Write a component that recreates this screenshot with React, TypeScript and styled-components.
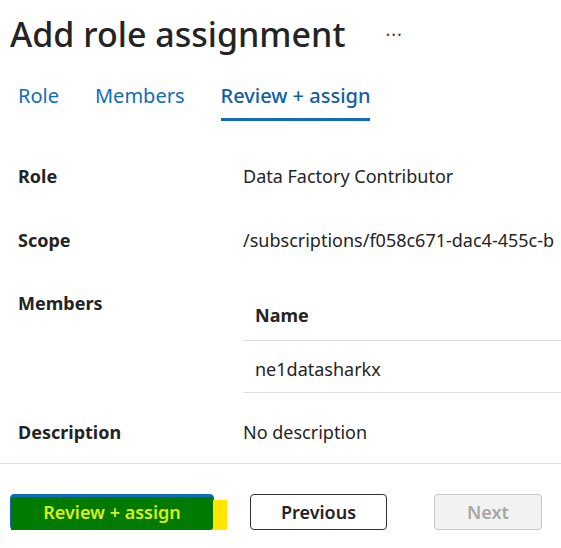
import styled, { createGlobalStyle } from "styled-components"

const GlobalStyle = createGlobalStyle`
    html, body {
        margin: 0;
        padding: 0;
        background: #ffffff;
        font-family: "Noto Sans", "Open Sans", sans-serif;
        color: #242424;
    }
`

const Page = styled.div`
    width: 561px;
    height: 548px;
    overflow: hidden;
    display: flex;
    flex-direction: column;
`

const Header = styled.div`
    display: flex;
    align-items: center;
    padding: 12px 0 0 10px;
    height: 44px;
`

const Title = styled.h1`
    margin: 0;
    font-size: 34px;
    font-weight: 500;
    line-height: 44px;
    color: #242424;
`

const More = styled.span`
    margin-left: 40px;
    font-size: 18px;
    color: #424242;
    letter-spacing: 1px;
    line-height: 44px;
`

const Tabs = styled.div`
    display: flex;
    gap: 36px;
    padding: 20px 0 0 18px;
    height: 45px;
    box-sizing: content-box;
`

const Tab = styled.div<{ $active?: boolean }>`
    font-size: 20px;
    line-height: 40px;
    height: 42px;
    color: ${props => props.$active ? "#115ea3" : "#0f6cbd"};
    font-weight: ${props => props.$active ? 500 : 400};
    border-bottom: 3px solid ${props => props.$active ? "#0f6cbd" : "transparent"};
`

const Details = styled.div`
    display: grid;
    grid-template-columns: 225px 1fr;
    padding-left: 18px;
    margin-top: 23px;
`

const Label = styled.div<{ $top?: number }>`
    font-size: 18px;
    font-weight: 700;
    line-height: 26px;
    color: #242424;
    padding-top: ${props => props.$top ?? 0}px;
    align-self: ${props => props.$top !== undefined ? "start" : "center"};
`

const Value = styled.div`
    font-size: 18px;
    line-height: 26px;
    color: #242424;
    white-space: nowrap;
    overflow: hidden;
`

const Cell = styled.div<{ $h: number; $pad?: number }>`
    height: ${props => props.$h}px;
    display: flex;
    align-items: ${props => props.$pad !== undefined ? "flex-start" : "center"};
    padding-top: ${props => props.$pad ?? 0}px;
    box-sizing: border-box;
    overflow: hidden;
`

const Table = styled.div`
    display: flex;
    flex-direction: column;
    margin-top: 17px;
`

const TableRow = styled.div<{ $head?: boolean }>`
    height: 52px;
    display: flex;
    align-items: center;
    padding: ${props => props.$head ? "0" : "4px"} 12px 0;
    box-sizing: border-box;
    border-bottom: 1px solid #e0e0e0;
    font-size: 18px;
    font-weight: ${props => props.$head ? 700 : 400};
    color: #242424;
`

const Footer = styled.div`
    border-top: 1px solid #e0e0e0;
    display: flex;
    gap: 36px;
    padding: 30px 0 0 10px;
`

const Highlight = styled.div`
    position: relative;
    display: flex;
`

const Button = styled.button<{ $variant: "primary" | "default" | "disabled" }>`
    height: 36px;
    box-sizing: border-box;
    border-radius: 4px;
    font-family: "Noto Sans", "Open Sans", sans-serif;
    font-size: 18px;
    font-weight: 600;
    padding: 0 20px;
    cursor: pointer;
    background: ${props =>
        props.$variant === "primary" ? "#0f6cbd" :
        props.$variant === "disabled" ? "#f2f2f2" : "#ffffff"};
    color: ${props =>
        props.$variant === "primary" ? "#d9ef17" :
        props.$variant === "disabled" ? "#a6a6a6" : "#242424"};
    border: 1px solid ${props =>
        props.$variant === "primary" ? "#0f6cbd" :
        props.$variant === "disabled" ? "#c7c7c7" : "#333333"};
`

const ButtonText = styled.span`
    position: relative;
    z-index: 2;
`

const Marker = styled.span`
    position: absolute;
    z-index: 1;
    left: 190px;
    top: 6px;
    width: 27px;
    height: 30px;
    background: #ffe600;
`

const GreenStroke = styled.span`
    position: absolute;
    z-index: 1;
    left: 1px;
    top: 3px;
    width: 202px;
    height: 33px;
    background: #007a00;
    border-radius: 2px 0 3px 0;
`

export default function App() {
    return (
        <Page>
            <GlobalStyle />
            <Header>
                <Title>Add role assignment</Title>
                <More>···</More>
            </Header>
            <Tabs>
                <Tab>Role</Tab>
                <Tab>Members</Tab>
                <Tab $active>Review + assign</Tab>
            </Tabs>
            <Details>
                <Label>Role</Label>
                <Cell $h={64}><Value>Data Factory Contributor</Value></Cell>
                <Label>Scope</Label>
                <Cell $h={64}><Value>/subscriptions/f058c671-dac4-455c-b</Value></Cell>
                <Label $top={18}>Members</Label>
                <Table>
                    <TableRow $head>Name</TableRow>
                    <TableRow>ne1datasharkx</TableRow>
                </Table>
                <Label $top={26}>Description</Label>
                <Cell $h={70} $pad={26}><Value>No description</Value></Cell>
            </Details>
            <Footer>
                <Highlight>
                    <Marker />
                    <GreenStroke />
                    <Button $variant="primary" style={{ width: 204 }}>
                        <ButtonText>Review + assign</ButtonText>
                    </Button>
                </Highlight>
                <Button $variant="default" style={{ width: 137 }}>Previous</Button>
                <Button $variant="disabled" style={{ width: 108, marginLeft: 11 }}>Next</Button>
            </Footer>
        </Page>
    )
}
